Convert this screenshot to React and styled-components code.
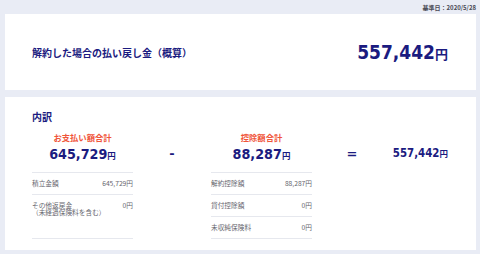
import React from "react";
import styled, { createGlobalStyle } from "styled-components";

const Global = createGlobalStyle`
  html, body { margin: 0; padding: 0; background: #e9ecf5; }
  body { font-family: "Noto Sans CJK JP", "Noto Sans", sans-serif; }
`;

const NAVY = "#1b1b80";
const RED = "#f0553a";

const Page = styled.div`
  width: 480px;
  height: 254px;
  box-sizing: border-box;
  padding: 0 4px 0 5px;
  display: flex;
  flex-direction: column;
`;

const DateLine = styled.div`
  height: 14px;
  display: flex;
  align-items: center;
  justify-content: flex-end;
  font-size: 6px;
  font-weight: 700;
  color: #4a4a55;
`;

const Card = styled.section`
  background: #fff;
  box-sizing: border-box;
`;

const TotalCard = styled(Card)`
  height: 76px;
  display: flex;
  align-items: center;
  justify-content: space-between;
  padding: 0 28px 0 27px;
`;

const TotalTitle = styled.h1`
  margin: 0;
  font-size: 10px;
  font-weight: 700;
  color: ${NAVY};
`;

const Amount = styled.span`
  font-family: "DejaVu Sans Condensed", "DejaVu Sans", "Noto Sans CJK JP", sans-serif;
  color: ${NAVY};
  font-weight: 700;
  font-size: ${(p) => p.$size}px;
  line-height: 1;
  white-space: nowrap;
`;

const Yen = styled.span`
  font-family: "Noto Sans CJK JP", sans-serif;
  font-size: ${(p) => p.$size}px;
`;

const BreakdownCard = styled(Card)`
  margin-top: 7px;
  height: 153px;
  padding: 13px 28px 0 27px;
`;

const Heading = styled.h2`
  margin: 0;
  font-size: 10px;
  line-height: 14px;
  font-weight: 700;
  color: ${NAVY};
`;

const Grid = styled.div`
  margin-top: 8px;
  display: grid;
  grid-template-columns: 101px 78px 101px 80px 56px;
  grid-template-rows: auto auto;
  align-items: stretch;
`;

const Summary = styled.div`
  display: flex;
  flex-direction: column;
  align-items: ${(p) => (p.$align === "end" ? "flex-end" : "center")};
  justify-content: flex-end;
  padding-bottom: 7px;
`;

const SummaryLabel = styled.div`
  font-size: 8.3px;
  line-height: 10px;
  font-weight: 700;
  color: ${RED};
`;

const SummaryValue = styled.div`
  margin-top: 1px;
  height: 22px;
  display: flex;
  align-items: center;
`;

const Operator = styled.div`
  display: flex;
  align-items: flex-end;
  justify-content: center;
  padding-bottom: 7px;
  color: ${NAVY};
  font-family: "DejaVu Sans", sans-serif;
  font-weight: 700;
  font-size: 13px;
  line-height: 22px;
`;

const DetailList = styled.div`
  display: flex;
  flex-direction: column;
  border-bottom: 1px solid #e6e8ee;
`;

const DetailRow = styled.div`
  display: flex;
  justify-content: space-between;
  align-items: flex-start;
  border-top: 1px solid #e6e8ee;
  padding: 7px 0;
  font-size: 6.7px;
  line-height: 7px;
  color: #66666e;
  flex: ${(p) => (p.$grow ? 1 : "none")};
`;

const DetailLabel = styled.span`
  white-space: pre-line;
  line-height: 6.5px;
`;

const Spacer = styled.div``;

export default function App() {
  return (
    <>
      <Global />
      <Page>
        <DateLine>基準日：2020/5/28</DateLine>
        <TotalCard>
          <TotalTitle>解約した場合の払い戻し金（概算）</TotalTitle>
          <Amount $size={19}>
            557,442<Yen $size={13}>円</Yen>
          </Amount>
        </TotalCard>
        <BreakdownCard>
          <Heading>内訳</Heading>
          <Grid>
            <Summary>
              <SummaryLabel>お支払い額合計</SummaryLabel>
              <SummaryValue>
                <Amount $size={14.2}>
                  645,729<Yen $size={8.5}>円</Yen>
                </Amount>
              </SummaryValue>
            </Summary>
            <Operator>-</Operator>
            <Summary>
              <SummaryLabel>控除額合計</SummaryLabel>
              <SummaryValue>
                <Amount $size={14.2}>
                  88,287<Yen $size={8.5}>円</Yen>
                </Amount>
              </SummaryValue>
            </Summary>
            <Operator>=</Operator>
            <Summary $align="end">
              <SummaryValue>
                <Amount $size={11.4}>
                  557,442<Yen $size={8.5}>円</Yen>
                </Amount>
              </SummaryValue>
            </Summary>

            <DetailList>
              <DetailRow>
                <span>積立金額</span>
                <span>645,729円</span>
              </DetailRow>
              <DetailRow $grow>
                <DetailLabel>{"その他返戻金\n（未経過保険料を含む）"}</DetailLabel>
                <span>0円</span>
              </DetailRow>
            </DetailList>
            <Spacer />
            <DetailList>
              <DetailRow>
                <span>解約控除額</span>
                <span>88,287円</span>
              </DetailRow>
              <DetailRow>
                <span>貸付控除額</span>
                <span>0円</span>
              </DetailRow>
              <DetailRow>
                <span>未収純保険料</span>
                <span>0円</span>
              </DetailRow>
            </DetailList>
          </Grid>
        </BreakdownCard>
      </Page>
    </>
  );
}
